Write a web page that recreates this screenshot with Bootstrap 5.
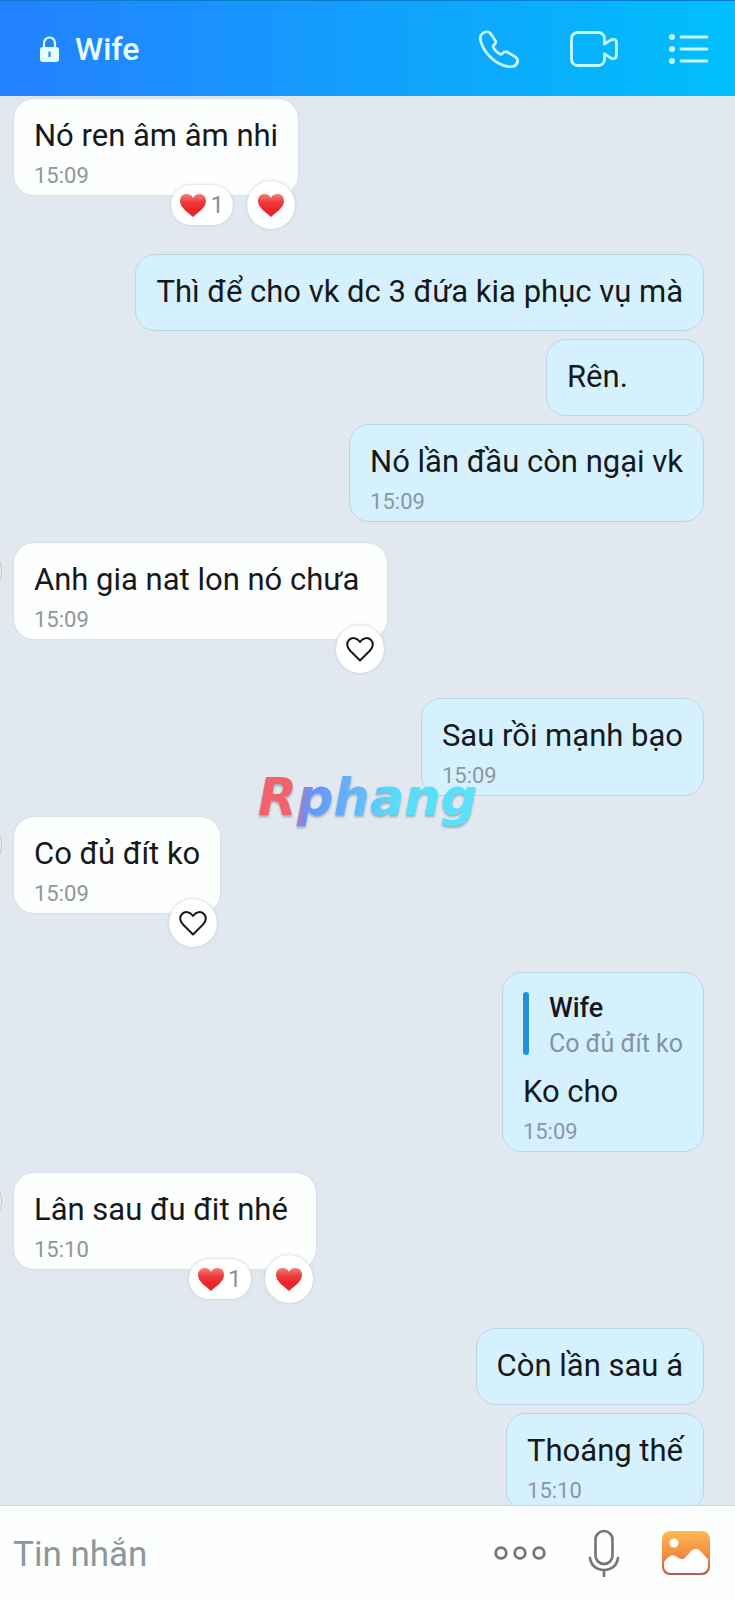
<!DOCTYPE html>
<html lang="vi">
<head>
<meta charset="utf-8">
<meta name="viewport" content="width=device-width, initial-scale=1">
<title>Wife</title>
<link href="https://cdn.jsdelivr.net/npm/bootstrap@5.3.0/dist/css/bootstrap.min.css" rel="stylesheet">
<style>
  body { font-family: Roboto, "Noto Sans", sans-serif; background: #e1e8ef; color: #16191b; }
  .topbar { height: 96px; padding: 0 26px 0 40px; background: linear-gradient(90deg, #2480ff, #00bffb); border-top: 1px solid #087ccd; color: #e6fdff; }
  .topbar h1 { font-size: 32px; line-height: 38px; font-weight: 500; }
  .tools { gap: 51px; color: #c5fbff; }
  .icon-btn { display: block; padding: 0; border: 0; background: none; color: inherit; }
  .icon-btn svg, .topbar svg { display: block; }
  .thread { padding: 3px 31px 0 14px; min-height: 0; }
  .bubble { position: relative; border-radius: 20px; padding: 18px 20px 6px; box-shadow: 0 0 2px #c3ccd6; background: #fdfefe; }
  .bubble p { font-size: 31px; line-height: 38px; margin: 0; white-space: nowrap; }
  .bubble time { display: block; font-size: 22px; line-height: 26px; margin-top: 8px; color: #8c979e; }
  .bubble.out { background: #d5f1fe; border: 1px solid #bcd6e3; box-shadow: none; min-width: 158px; }
  .bubble.bare { padding-bottom: 19px; }
  .bubble.roomy { padding-right: 28px; }
  .sent { gap: 8px; margin: 59px 0 21px; }
  .avatar { position: absolute; left: -72px; top: -2px; width: 60px; height: 60px; border-radius: 50%; border: 1px solid #bfc8ca; background: #eef1f1; }
  .reactions { position: absolute; right: 3px; bottom: -34px; gap: 14px; }
  .react { display: flex; align-items: center; justify-content: center; height: 48px; width: 48px; padding: 0; border: 0; border-radius: 24px; background: #fff; box-shadow: 0 0 3px #bbc4ce; color: #16191b; }
  .react.tally { width: 62px; height: 40px; gap: 4px; font-size: 24px; line-height: 28px; color: #8c9094; }
  .quote { gap: 20px; margin: 1px 0 9px; }
  .quote-bar { width: 6px; height: 63px; border-radius: 3px; background: #1f92dc; }
  .quote strong { display: block; font-size: 27px; line-height: 32px; font-weight: 500; }
  .quote span { display: block; font-size: 25px; line-height: 40px; color: #82949c; white-space: nowrap; }
  .composer { height: 95px; padding: 0 25px 0 13px; background: #fdfefe; border-top: 1px solid #cfd5da; z-index: 1; }
  .composer input { font-size: 35px; line-height: 44px; min-width: 0; }
  .composer input::placeholder { color: #8b979d; opacity: 1; }
  .attach { gap: 42px; color: #737475; }
  .watermark { z-index: 2; pointer-events: none; padding-bottom: 6px; font: italic bold 51px/51px "DejaVu Sans", sans-serif; color: transparent; background: linear-gradient(98deg, #f3626b 14%, #e56c80 18%, #6592fb 24%, #65aefb 40%, #58dcfb 62%, #59e3fa); -webkit-background-clip: text; background-clip: text; filter: drop-shadow(0 2px 1px #66819799); }
</style>
</head>
<body>
<svg class="position-absolute" width="0" height="0" aria-hidden="true">
  <defs>
    <linearGradient id="heartFill" x1="0" y1="0" x2="0" y2="1"><stop offset="0" stop-color="#f58078"/><stop offset=".35" stop-color="#eb3d3e"/><stop offset=".7" stop-color="#f0202a"/><stop offset="1" stop-color="#c93535"/></linearGradient>
    <linearGradient id="photoFill" x1="0" y1="0" x2="0" y2="1"><stop offset="0" stop-color="#fdb954"/><stop offset=".55" stop-color="#f48a42"/><stop offset="1" stop-color="#b85a3f"/></linearGradient>
  </defs>
</svg>

<div class="d-flex flex-column vh-100 overflow-hidden">
  <header class="topbar d-flex align-items-center justify-content-between flex-shrink-0">
    <div class="d-flex align-items-center">
      <svg width="19" height="26" viewBox="0 0 19 26" aria-hidden="true"><path d="M4 12V7a5.500 5.500 0 0 1 11 0v5" fill="none" stroke="currentColor" stroke-width="2.200"/><rect y="11" width="19" height="15" rx="3" fill="currentColor"/><path d="M9.500 15.500v5.500" stroke="#1d84fa" stroke-width="2"/></svg>
      <h1 class="mb-0 ms-3">Wife</h1>
    </div>
    <div class="tools d-flex align-items-center">
      <button class="icon-btn" type="button" aria-label="Gọi thoại"><svg width="40" height="38" viewBox="0 0 40 38" fill="none" stroke="currentColor" stroke-width="2.800" stroke-linejoin="round"><path d="M3.500 3.500C6 1.500 9.500 1 11.500 3.500l5 7.500c1 2-.2 3-1.700 4.300-1.200 1-.8 2 .4 3.700 1.700 2.400 3.800 4.300 6 5.200 1.200.5 2-.2 2.800-1.200 1.300-1.600 2.900-1.800 4.600-.8l7.700 4.700c2.500 1.600 2.900 4 1.500 6.600-1.400 2.700-4.600 3.800-8.300 3.100C16.500 34.800 4.500 22.500 1.700 11c-.8-3.300-.2-5.900 1.800-7.500z"/></svg></button>
      <button class="icon-btn" type="button" aria-label="Gọi video"><svg width="48" height="36" viewBox="0 0 48 36" fill="none" stroke="currentColor" stroke-width="2.800" stroke-linejoin="round"><path d="M8 1.500h20c4 0 6.500 2.500 6.500 6.500v5.200l5.700-3.900c3.300-2 6.300-.8 6.300 2.400v12.600c0 3.300-3 4.400-6.300 2.400l-5.700-3.900V28c0 4-2.500 6.500-6.500 6.500H8c-4 0-6.500-2.500-6.500-6.500V8c0-4 2.500-6.500 6.500-6.500z"/></svg></button>
      <button class="icon-btn" type="button" aria-label="Tùy chọn"><svg width="40" height="30" viewBox="0 0 40 30"><g fill="currentColor"><circle cx="3" cy="3" r="3"/><circle cx="3" cy="15" r="3"/><circle cx="3" cy="27" r="3"/></g><path d="M12 3h26M12 15h26M12 27h26" stroke="currentColor" stroke-width="2.800" stroke-linecap="round"/></svg></button>
    </div>
  </header>

  <main class="thread flex-grow-1 overflow-hidden">
    <div class="d-flex">
      <div class="bubble">
        <p>Nó ren âm âm nhi</p><time>15:09</time>
        <div class="reactions d-flex align-items-center">
          <button class="react tally" type="button"><svg width="26" height="23" viewBox="0 0 26 23"><path d="M13 23C9 19 0 14 0 7 0 2.500 3 0 6.500 0 9.500 0 12 1.500 13 4c1-2.500 3.500-4 6.500-4C23 0 26 2.500 26 7c0 7-9 12-13 16z" fill="url(#heartFill)"/></svg>1</button>
          <button class="react" type="button" aria-label="Thả tim"><svg width="26" height="23" viewBox="0 0 26 23"><path d="M13 23C9 19 0 14 0 7 0 2.500 3 0 6.500 0 9.500 0 12 1.500 13 4c1-2.500 3.500-4 6.500-4C23 0 26 2.500 26 7c0 7-9 12-13 16z" fill="url(#heartFill)"/></svg></button>
        </div>
      </div>
    </div>

    <div class="sent d-flex flex-column align-items-end">
      <div class="bubble out bare"><p>Thì để cho vk dc 3 đứa kia phục vụ mà</p></div>
      <div class="bubble out bare"><p>Rên.</p></div>
      <div class="bubble out"><p>Nó lần đầu còn ngại vk</p><time>15:09</time></div>
    </div>

    <div class="d-flex">
      <div class="bubble roomy">
        <span class="avatar"></span>
        <p>Anh gia nat lon nó chưa</p><time>15:09</time>
        <div class="reactions d-flex"><button class="react" type="button" aria-label="Thả tim"><svg width="28" height="25" viewBox="0 0 28 25" fill="none" stroke="currentColor" stroke-width="2" stroke-linejoin="round"><path d="M14 23.500L4 13.500C.5 10 .5 5.500 3 3c3-3 8-2.500 11 2 3-4.500 8-5 11-2 2.500 2.500 2.500 7-1 10.500z"/></svg></button></div>
      </div>
    </div>

    <div class="sent d-flex flex-column align-items-end">
      <div class="bubble out"><p>Sau rồi mạnh bạo</p><time>15:09</time></div>
    </div>

    <div class="d-flex">
      <div class="bubble">
        <span class="avatar"></span>
        <p>Co đủ đít ko</p><time>15:09</time>
        <div class="reactions d-flex"><button class="react" type="button" aria-label="Thả tim"><svg width="28" height="25" viewBox="0 0 28 25" fill="none" stroke="currentColor" stroke-width="2" stroke-linejoin="round"><path d="M14 23.500L4 13.500C.5 10 .5 5.500 3 3c3-3 8-2.500 11 2 3-4.500 8-5 11-2 2.500 2.500 2.500 7-1 10.500z"/></svg></button></div>
      </div>
    </div>

    <div class="sent d-flex flex-column align-items-end">
      <div class="bubble out">
        <div class="quote d-flex align-items-start">
          <div class="quote-bar"></div>
          <div><strong>Wife</strong><span>Co đủ đít ko</span></div>
        </div>
        <p>Ko cho</p><time>15:09</time>
      </div>
    </div>

    <div class="d-flex">
      <div class="bubble roomy">
        <span class="avatar"></span>
        <p>Lân sau đu đit nhé</p><time>15:10</time>
        <div class="reactions d-flex align-items-center">
          <button class="react tally" type="button"><svg width="26" height="23" viewBox="0 0 26 23"><path d="M13 23C9 19 0 14 0 7 0 2.500 3 0 6.500 0 9.500 0 12 1.500 13 4c1-2.500 3.500-4 6.500-4C23 0 26 2.500 26 7c0 7-9 12-13 16z" fill="url(#heartFill)"/></svg>1</button>
          <button class="react" type="button" aria-label="Thả tim"><svg width="26" height="23" viewBox="0 0 26 23"><path d="M13 23C9 19 0 14 0 7 0 2.500 3 0 6.500 0 9.500 0 12 1.500 13 4c1-2.500 3.500-4 6.500-4C23 0 26 2.500 26 7c0 7-9 12-13 16z" fill="url(#heartFill)"/></svg></button>
        </div>
      </div>
    </div>

    <div class="sent d-flex flex-column align-items-end">
      <div class="bubble out bare"><p>Còn lần sau á</p></div>
      <div class="bubble out"><p>Thoáng thế</p><time>15:10</time></div>
    </div>
  </main>

  <footer class="composer d-flex align-items-center flex-shrink-0">
    <input class="flex-grow-1 border-0 bg-transparent p-0 pt-1" type="text" placeholder="Tin nhắn" aria-label="Tin nhắn">
    <div class="attach d-flex align-items-center">
      <button class="icon-btn" type="button" aria-label="Thêm"><svg width="52" height="14" viewBox="0 0 52 14" fill="none" stroke="currentColor" stroke-width="2.800"><circle cx="7" cy="7" r="5.300"/><circle cx="26" cy="7" r="5.300"/><circle cx="45" cy="7" r="5.300"/></svg></button>
      <button class="icon-btn" type="button" aria-label="Ghi âm"><svg width="32" height="48" viewBox="0 0 32 48" fill="none" stroke="currentColor" stroke-width="2.600"><rect x="7.500" y="2" width="17" height="33" rx="8.500"/><path d="M2 29c1 7.500 6.500 12 14 12s13-4.500 14-12M16 41v6" stroke-linecap="round"/></svg></button>
      <button class="icon-btn" type="button" aria-label="Ảnh"><svg width="48" height="44" viewBox="0 0 48 44"><rect width="48" height="44" rx="8" fill="url(#photoFill)"/><circle cx="12" cy="12" r="4.500" fill="#fffdf8"/><path d="M2 31C5 27 9 23.500 12 24.500c4 1.500 6 5 10 3 4-2.500 6-8.500 11-9.500 6-1 9 8 13 10v7c0 4-3 7-7 7H9c-4 0-7-3-7-7z" fill="#fff"/></svg></button>
    </div>
  </footer>
</div>

<div class="watermark position-fixed top-50 start-50 translate-middle">Rphang</div>
<script src="https://cdn.jsdelivr.net/npm/bootstrap@5.3.0/dist/js/bootstrap.bundle.min.js"></script>
</body>
</html>
